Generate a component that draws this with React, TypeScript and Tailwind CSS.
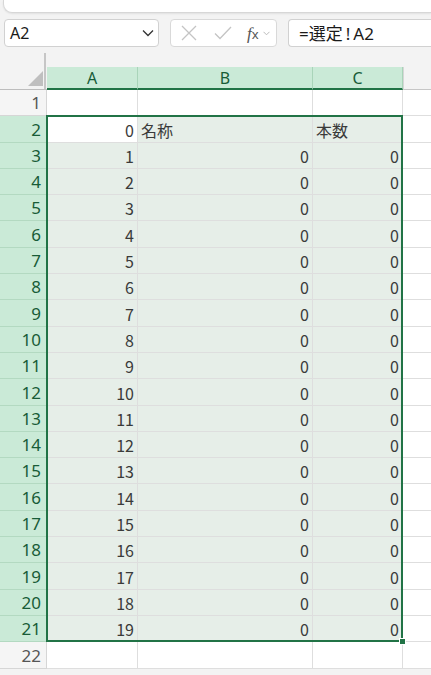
import React from "react";

const ROW_H = "h-[26.3px]";

function NameBox() {
  return (
    <div className="flex items-center justify-between w-[155px] h-[28px] bg-white border border-[#d1d1d1] rounded-[4px] pl-[5px] pr-[4px]">
      <span className="text-[16px] text-[#1a1a1a] font-['Noto_Sans',sans-serif] leading-none">A2</span>
      <svg width="12" height="8" viewBox="0 0 12 8" fill="none">
        <path d="M1 1.5 L6 6.5 L11 1.5" stroke="#333" strokeWidth="1.3" />
      </svg>
    </div>
  );
}

function FormulaButtons() {
  return (
    <div className="flex items-center w-[107px] h-[28px] bg-white border border-[#d9d9d9] rounded-[4px] pl-[10px]">
      <svg width="16" height="16" viewBox="0 0 16 16" fill="none">
        <path d="M1 1 L15 15 M15 1 L1 15" stroke="#c4c4c4" strokeWidth="1.3" />
      </svg>
      <svg className="ml-[17px]" width="18" height="14" viewBox="0 0 18 14" fill="none">
        <path d="M1 7.5 L6 12.5 L17 1" stroke="#c4c4c4" strokeWidth="1.3" />
      </svg>
      <span className="ml-[15px] text-[17px] italic text-[#555] font-['Liberation_Serif',serif] leading-none">
        f<span className="text-[13px] not-italic font-['Noto_Sans',sans-serif]">x</span>
      </span>
      <svg className="ml-[4px]" width="7" height="5" viewBox="0 0 7 5" fill="none">
        <path d="M0.5 0.8 L3.5 3.8 L6.5 0.8" stroke="#bbb" strokeWidth="1" />
      </svg>
    </div>
  );
}

function FormulaInput() {
  return (
    <div className="flex items-center flex-1 h-[28px] bg-white border border-[#d1d1d1] border-r-0 rounded-l-[4px] pl-[10px]">
      <span className="text-[17px] text-[#1a1a1a] font-['Noto_Sans','Noto_Sans_CJK_JP',sans-serif] leading-none">
        =選定<span className="mx-[3px]">!</span>A2
      </span>
    </div>
  );
}

type Row = { n: number; a: string; b: string; c: string; bLeft?: boolean };

const rows: Row[] = [
  { n: 1, a: "", b: "", c: "" },
  { n: 2, a: "0", b: "名称", c: "本数", bLeft: true },
  ...Array.from({ length: 19 }, (_, i) => ({ n: i + 3, a: String(i + 1), b: "0", c: "0" })),
  { n: 22, a: "", b: "", c: "" },
];

function Cell({
  text,
  width,
  sel,
  active,
  left,
}: {
  text: string;
  width: string;
  sel: boolean;
  active?: boolean;
  left?: boolean;
}) {
  const bg = active ? "bg-white" : sel ? "bg-[#e6eee8]" : "bg-white";
  return (
    <div
      className={`${width} h-full shrink-0 flex items-end pb-[1px] border-r border-b border-[#dedede] ${bg} ${
        left ? "justify-start pl-[3px]" : "justify-end pr-[3px]"
      }`}
    >
      <span className="text-[16px] leading-[22px] text-[#3a3a3a] font-['Noto_Sans_CJK_JP',sans-serif]">{text}</span>
    </div>
  );
}

export default function App() {
  return (
    <div className="w-[431px] h-[675px] bg-[#f3f3f3] overflow-hidden relative">
      <div className="ml-[3px] h-[13px] bg-white border-l border-b border-[#d7d7d7] rounded-bl-[9px] shadow-[0_1px_2px_rgba(0,0,0,0.08)]" />

      <div className="flex items-center mt-[6px] pl-[4px] gap-[11px]">
        <NameBox />
        <FormulaButtons />
        <FormulaInput />
      </div>

      {/* grid */}
      <div className="relative mt-[6px]">
        {/* corner + column headers */}
        <div className="flex h-[37px]">
          <div className="w-[47px] shrink-0 h-full relative border-b border-[#bdbdbd]">
            <div className="absolute right-[1px] top-0 bottom-0 w-[2px] bg-[#c6c6c6]" />
            <svg className="absolute right-[4px] bottom-[3px]" width="15" height="15" viewBox="0 0 15 15">
              <path d="M15 0 L15 15 L0 15 Z" fill="#bfbfbf" />
            </svg>
          </div>
          <div className="flex-1 flex flex-col">
            <div className="h-[14px]" />
            <div className="flex h-[23px]">
              {[
                ["A", "w-[91px]"],
                ["B", "w-[175px]"],
                ["C", "w-[90px]"],
              ].map(([l, w]) => (
                <div
                  key={l}
                  className={`${w} shrink-0 flex items-center justify-center bg-[#caead7] border-r border-[#a9d4b9] border-b-2 border-b-[#217346] text-[16px] text-[#185c37] font-['Noto_Sans',sans-serif]`}
                >
                  {l}
                </div>
              ))}
              <div className="flex-1 border-b border-[#c6c6c6] border-l border-l-[#d6d6d6]" />
            </div>
          </div>
        </div>

        {/* rows */}
        {rows.map((r) => {
          const sel = r.n >= 2 && r.n <= 21;
          return (
            <div key={r.n} className={`flex ${ROW_H}`}>
              <div
                className={`w-[47px] shrink-0 h-full flex items-end justify-end pr-[5px] pb-[1px] border-r border-b ${
                  sel
                    ? "bg-[#caead7] border-[#b3d9c1] text-[#185c37]"
                    : "bg-[#f5f5f5] border-[#d6d6d6] text-[#555]"
                }`}
              >
                <span className="text-[17px] leading-[22px] font-['Noto_Sans',sans-serif]">{r.n}</span>
              </div>
              <Cell text={r.a} width="w-[91px]" sel={sel} active={r.n === 2} />
              <Cell text={r.b} width="w-[175px]" sel={sel} left={r.bLeft} />
              <Cell text={r.c} width="w-[90px]" sel={sel} left={r.bLeft} />
              <div className="flex-1 h-full bg-white border-b border-[#dedede]" />
            </div>
          );
        })}

        {/* selection outline */}
        <div className="absolute left-[46px] top-[62.3px] w-[357px] h-[527px] border-2 border-[#217346] pointer-events-none">
          <div className="absolute -right-[5px] -bottom-[5px] w-[7px] h-[7px] bg-[#217346] border border-white" />
        </div>
      </div>
    </div>
  );
}
